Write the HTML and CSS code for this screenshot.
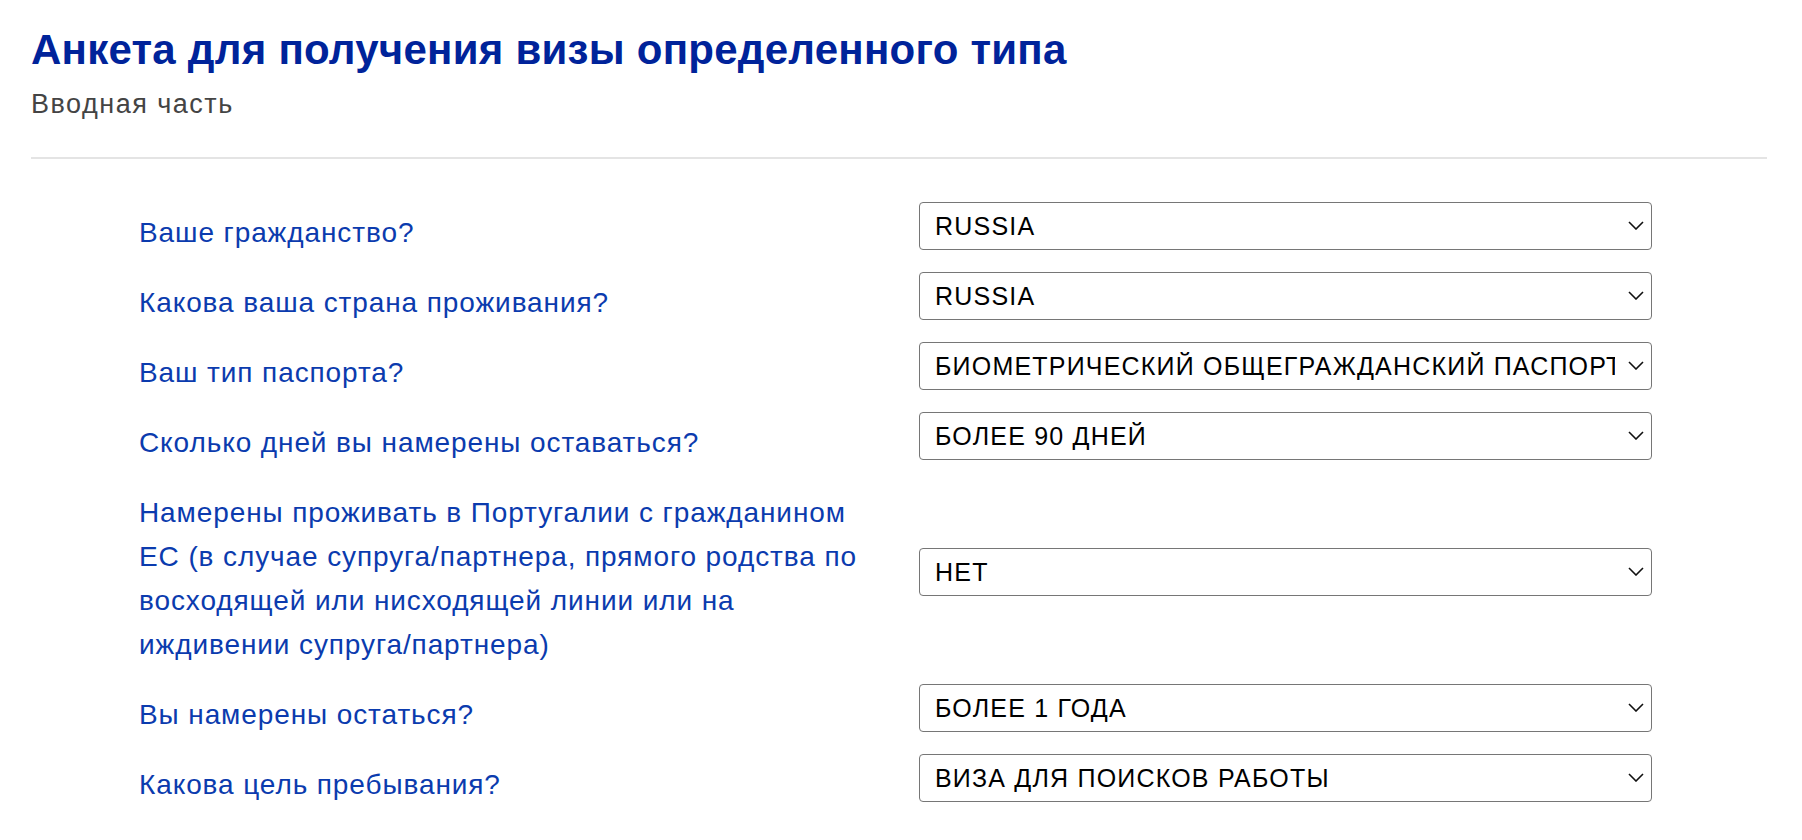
FILE: index.html
```html
<!DOCTYPE html>
<html lang="ru">
<head>
<meta charset="utf-8">
<title>Анкета для получения визы определенного типа</title>
<link rel="stylesheet" href="styles.css">
</head>
<body>
<div class="page">
  <header class="head">
    <h1 class="title">Анкета для получения визы определенного типа</h1>
    <p class="subtitle">Вводная часть</p>
  </header>
  <form class="form">
    <label class="label" for="q1">Ваше гражданство?</label>
    <div class="field">
      <select id="q1" class="select"><option>RUSSIA</option></select>
      <svg class="chev" viewBox="0 0 16 9" width="16" height="9"><path d="M1 1l7 7 7-7" fill="none" stroke="#111" stroke-width="1.6"/></svg>
    </div>

    <label class="label" for="q2">Какова ваша страна проживания?</label>
    <div class="field">
      <select id="q2" class="select"><option>RUSSIA</option></select>
      <svg class="chev" viewBox="0 0 16 9" width="16" height="9"><path d="M1 1l7 7 7-7" fill="none" stroke="#111" stroke-width="1.6"/></svg>
    </div>

    <label class="label" for="q3">Ваш тип паспорта?</label>
    <div class="field">
      <select id="q3" class="select"><option>БИОМЕТРИЧЕСКИЙ ОБЩЕГРАЖДАНСКИЙ ПАСПОРТ</option></select>
      <svg class="chev" viewBox="0 0 16 9" width="16" height="9"><path d="M1 1l7 7 7-7" fill="none" stroke="#111" stroke-width="1.6"/></svg>
    </div>

    <label class="label" for="q4">Сколько дней вы намерены оставаться?</label>
    <div class="field">
      <select id="q4" class="select"><option>БОЛЕЕ 90 ДНЕЙ</option></select>
      <svg class="chev" viewBox="0 0 16 9" width="16" height="9"><path d="M1 1l7 7 7-7" fill="none" stroke="#111" stroke-width="1.6"/></svg>
    </div>

    <label class="label" for="q5">Намерены проживать в Португалии с гражданином ЕС (в случае супруга/партнера, прямого родства по восходящей или нисходящей линии или на иждивении супруга/партнера)</label>
    <div class="field">
      <select id="q5" class="select"><option>НЕТ</option></select>
      <svg class="chev" viewBox="0 0 16 9" width="16" height="9"><path d="M1 1l7 7 7-7" fill="none" stroke="#111" stroke-width="1.6"/></svg>
    </div>

    <label class="label" for="q6">Вы намерены остаться?</label>
    <div class="field">
      <select id="q6" class="select"><option>БОЛЕЕ 1 ГОДА</option></select>
      <svg class="chev" viewBox="0 0 16 9" width="16" height="9"><path d="M1 1l7 7 7-7" fill="none" stroke="#111" stroke-width="1.6"/></svg>
    </div>

    <label class="label" for="q7">Какова цель пребывания?</label>
    <div class="field">
      <select id="q7" class="select"><option>ВИЗА ДЛЯ ПОИСКОВ РАБОТЫ</option></select>
      <svg class="chev" viewBox="0 0 16 9" width="16" height="9"><path d="M1 1l7 7 7-7" fill="none" stroke="#111" stroke-width="1.6"/></svg>
    </div>
  </form>
</div>
</body>
</html>
```
FILE: styles.css
```css
html, body {
  margin: 0;
  padding: 0;
  background: #fff;
}
body {
  font-family: "Liberation Sans", Arial, sans-serif;
}
.page {
  padding: 0 35px 0 31px;
}
.head {
  padding-top: 26px;
  padding-bottom: 37px;
  border-bottom: 2px solid #e4e4e4;
}
.title {
  margin: 0;
  font-size: 42px;
  line-height: 48px;
  font-weight: 700;
  letter-spacing: 0.25px;
  color: #00239a;
}
.subtitle {
  margin: 14px 0 0;
  font-size: 27px;
  line-height: 32px;
  letter-spacing: 1.5px;
  color: #444;
}
.form {
  display: grid;
  grid-template-columns: 780px 733px;
  row-gap: 12px;
  align-items: center;
  padding: 38px 0 0 108px;
}
.label {
  max-width: 745px;
  padding-top: 14px;
  font-size: 28px;
  line-height: 44px;
  letter-spacing: 0.9px;
  color: #0b3bae;
}
.field {
  position: relative;
  height: 48px;
}
.select {
  -webkit-appearance: none;
  appearance: none;
  display: block;
  box-sizing: border-box;
  width: 733px;
  height: 48px;
  margin: 0;
  padding: 0 36px 0 15px;
  border: 1px solid #767676;
  border-radius: 4px;
  background: #fff;
  font-family: "Liberation Sans", Arial, sans-serif;
  font-size: 25px;
  letter-spacing: 1.2px;
  color: #000;
}
.chev {
  position: absolute;
  right: 8px;
  top: 19px;
  pointer-events: none;
}
```
